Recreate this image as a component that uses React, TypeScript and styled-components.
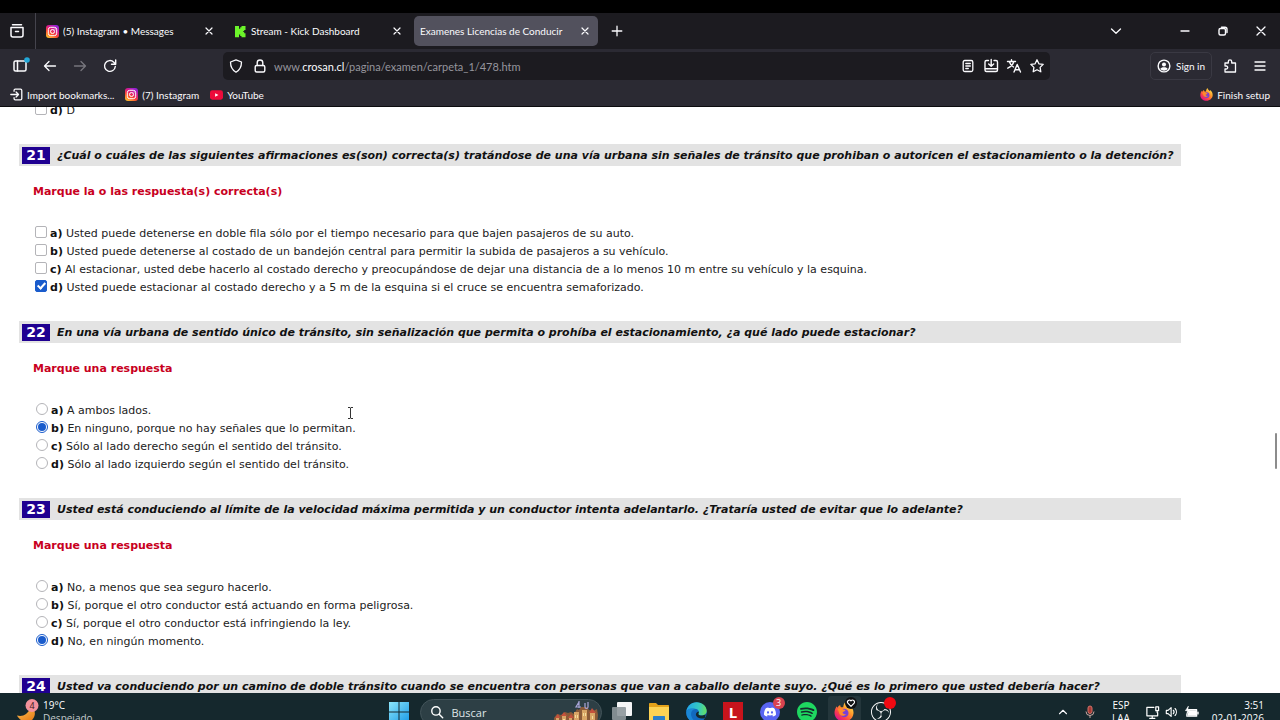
import React from 'react';
import styled, { createGlobalStyle } from 'styled-components';
import { SiDiscord, SiSpotify, SiObsstudio } from 'react-icons/si';

const UI_FONT = '"Open Sans", "Noto Sans", sans-serif';
const CHROME_FONT = 'Lato, "Open Sans", sans-serif';
const PAGE_FONT = '"DejaVu Sans", Verdana, sans-serif';

const GlobalStyle = createGlobalStyle`
  * { box-sizing: border-box; }
  body { margin: 0; background: #fff; font-family: ${UI_FONT}; }
  button { font: inherit; color: inherit; background: none; border: 0; padding: 0; }
  svg { display: block; flex: none; overflow: visible; }
`;

const Screen = styled.div`
  display: flex;
  flex-direction: column;
  height: 100vh;
  overflow: hidden;
  border-top: 13px solid #000;
`;

/* ---------- browser chrome ---------- */

const TabStrip = styled.div`
  display: flex;
  align-items: center;
  flex: none;
  height: 36px;
  background: #1c1b20;
  color: #fbfbfe;
  font-family: ${CHROME_FONT};
  font-size: 10px;
`;

const IconButton = styled.button<{ $width?: number; $dim?: boolean }>`
  display: flex;
  align-items: center;
  justify-content: center;
  flex: none;
  width: ${(p) => p.$width ?? 30}px;
  height: 28px;
  color: ${(p) => (p.$dim ? '#77767e' : '#fbfbfe')};
`;

const RecentBox = styled.div`
  display: flex;
  align-items: center;
  justify-content: center;
  width: 36px;
  height: 100%;
  padding-right: 2px;
  border-right: 1px solid #45444d;
`;

const Tabs = styled.div`
  display: flex;
  gap: 4px;
  padding-left: 2px;
`;

const Tab = styled.div<{ $active?: boolean }>`
  display: flex;
  align-items: center;
  gap: 4px;
  width: 184px;
  height: 30px;
  padding: 0 5px 0 ${(p) => (p.$active ? 6 : 8)}px;
  border-radius: 5px;
  background: ${(p) => (p.$active ? '#52515d' : 'transparent')};
`;

const TabTitle = styled.span`
  flex: 1;
  white-space: nowrap;
  overflow: hidden;
`;

const Spacer = styled.div`
  flex: 1;
`;

const WindowButtons = styled.div`
  display: flex;
  margin-left: 31px;
`;

const Toolbar = styled.div`
  display: flex;
  align-items: center;
  flex: none;
  height: 34px;
  padding: 0 5px;
  background: #2b2a33;
  color: #fbfbfe;
  font-family: ${CHROME_FONT};
  font-size: 10px;
`;

const AddressBar = styled.div`
  display: flex;
  align-items: center;
  flex: 1;
  height: 28px;
  margin: 0 100px 0 98px;
  padding: 0 1px;
  border-radius: 5px;
  background: #1c1b20;
`;

const AddressText = styled.div`
  flex: 1;
  padding-left: 3px;
  color: #96959d;
  font-size: 11px;

  b { color: #fbfbfe; font-weight: 400; }
`;

const SignIn = styled.button`
  display: flex;
  align-items: center;
  gap: 5px;
  width: 62px;
  height: 28px;
  margin-right: 3px;
  padding-left: 6px;
  border: 1px solid #3a3943;
  border-radius: 5px;
  white-space: nowrap;
`;

const Bookmarks = styled.div`
  display: flex;
  align-items: center;
  flex: none;
  gap: 11px;
  height: 24px;
  padding: 0 10px;
  border-bottom: 1px solid #0c0c0f;
  background: #2b2a33;
  color: #fbfbfe;
  font-family: ${CHROME_FONT};
  font-size: 10px;
`;

const Bookmark = styled.a`
  display: flex;
  align-items: center;
  gap: 4px;
  color: inherit;
  text-decoration: none;
  white-space: nowrap;
`;

/* ---------- exam page ---------- */

const Viewport = styled.main`
  position: relative;
  flex: 1;
  min-height: 0;
  overflow: hidden;
  background: #fff;
  color: #222;
  font-family: ${PAGE_FONT};
  font-size: 11px;
`;

const Exam = styled.div`
  margin: -6px 99px 0 19px;
`;

const Question = styled.section`
  padding-bottom: 25px;
`;

const QuestionBar = styled.h2`
  display: flex;
  align-items: center;
  gap: 7px;
  height: 22px;
  margin: 0;
  padding-left: 3px;
  background: #e3e3e3;
  color: #111;
  font-size: 11px;
  font-style: italic;
  font-weight: 700;
  white-space: nowrap;
`;

const QuestionNumber = styled.span`
  width: 28px;
  height: 17px;
  background: #1f0091;
  color: #fff;
  font-size: 14px;
  font-style: normal;
  line-height: 17px;
  text-align: center;
`;

const Prompt = styled.p`
  margin: 18px 0 24px 14px;
  color: #c8001e;
  font-weight: 700;
  line-height: 16px;
`;

const Options = styled.div`
  margin-left: 16px;
`;

const Option = styled.label`
  display: flex;
  align-items: center;
  gap: 3px;
  height: 18px;
  white-space: pre;

  b { color: #111; }
`;

const Choice = styled.input`
  appearance: none;
  position: relative;
  width: 12px;
  height: 12px;
  margin: 0 0 2px ${(p) => (p.type === 'radio' ? 1 : 0)}px;
  border: 1px solid #b4b4b8;
  border-radius: ${(p) => (p.type === 'radio' ? '50%' : '2px')};
  background: #fff;

  &:checked {
    border-color: #1a5ccc;
    background: ${(p) => (p.type === 'radio' ? '#fff' : '#1a5ccc')};
  }

  &[type='radio']:checked::after {
    content: '';
    position: absolute;
    inset: 1px;
    border-radius: 50%;
    background: #1a5ccc;
  }

  &[type='checkbox']:checked::after {
    content: '';
    position: absolute;
    box-sizing: border-box;
    left: 3px;
    top: 0;
    width: 5px;
    height: 8px;
    border: solid #fff;
    border-width: 0 2px 2px 0;
    transform: rotate(42deg);
  }
`;

const ScrollThumb = styled.div`
  position: absolute;
  right: 3px;
  top: 326px;
  width: 2px;
  height: 36px;
  border-radius: 1px;
  background: #8c8c8c;
`;

const Pointer = styled.svg`
  position: absolute;
  left: 347px;
  top: 300px;
`;

/* ---------- taskbar ---------- */

const TaskbarClip = styled.footer`
  flex: none;
  height: 27px;
  overflow: hidden;
  background: #15282d;
  color: #fff;
`;

const Taskbar = styled.div`
  display: grid;
  grid-template-columns: 1fr auto 1fr;
  align-items: center;
  height: 38px;
  font-size: 10px;
  line-height: 13px;
`;

const Weather = styled.div`
  display: flex;
  align-items: center;
  gap: 3px;
  padding-left: 16px;

  small { display: block; font-size: 10px; color: #c3cacc; }
`;

const Apps = styled.div`
  display: flex;
  align-items: center;
`;

const AppButton = styled.button<{ $active?: boolean }>`
  display: flex;
  align-items: center;
  justify-content: center;
  position: relative;
  width: ${(p) => (p.$active ? 33 : 37)}px;
  height: 32px;
  margin: 0 ${(p) => (p.$active ? 2 : 0)}px;
  border-radius: 3px;
  background: ${(p) => (p.$active ? '#24363b' : 'transparent')};
`;

const AppBadge = styled.span<{ $color: string }>`
  position: absolute;
  right: 4px;
  top: 1px;
  width: 12px;
  height: 12px;
  border-radius: 50%;
  background: ${(p) => p.$color};
  color: #fff;
  font-size: 9px;
  line-height: 12px;
  text-align: center;
`;

const SearchBox = styled.label`
  display: flex;
  align-items: center;
  gap: 8px;
  width: 182px;
  height: 27px;
  margin: 0 2px;
  padding: 0 2px 0 9px;
  border: 1px solid #43545a;
  border-radius: 14px;
  background: #2d3f45;
`;

const SearchInput = styled.input`
  flex: 1;
  min-width: 0;
  padding: 0;
  border: 0;
  outline: 0;
  background: none;
  color: #fff;
  font: 11px ${UI_FONT};

  &::placeholder { color: #dfe5e7; opacity: 1; }
`;

const Tray = styled.div`
  display: flex;
  align-items: center;
  justify-content: flex-end;
  padding-right: 16px;
`;

const TrayText = styled.div<{ $align: string; $width: number }>`
  width: ${(p) => p.$width}px;
  text-align: ${(p) => p.$align};
`;

const TrayIcons = styled.div`
  display: flex;
  align-items: center;
  gap: 5px;
  padding: 0 6px 0 7px;
`;

/* ---------- drawings ---------- */

type GlyphProps = { size?: number; width?: number; children: React.ReactNode };

const Glyph = ({ size = 16, width = 1.3, children }: GlyphProps) => (
  <svg width={size} height={size} viewBox="0 0 16 16" fill="none" stroke="currentColor"
    strokeWidth={width} strokeLinecap="round" strokeLinejoin="round" aria-hidden="true">
    {children}
  </svg>
);

const CloseGlyph = ({ size = 16 }: { size?: number }) => (
  <Glyph size={size} width={1.2}><path d="M5 5l6 6M11 5l-6 6" /></Glyph>
);

const InstagramLogo = ({ id }: { id: string }) => (
  <svg width="13" height="13" viewBox="0 0 13 13" aria-hidden="true">
    <defs>
      <linearGradient id={id} x1="0.2" y1="1" x2="0.8" y2="0">
        <stop offset="0" stopColor="#ffc02e" />
        <stop offset="0.35" stopColor="#fb4a32" />
        <stop offset="0.65" stopColor="#d61a8d" />
        <stop offset="1" stopColor="#8a22e0" />
      </linearGradient>
    </defs>
    <rect width="13" height="13" rx="3" fill={`url(#${id})`} />
    <rect x="2.3" y="2.3" width="8.4" height="8.4" rx="2.4" fill="none" stroke="#fff" />
    <circle cx="6.5" cy="6.5" r="2" fill="none" stroke="#fff" />
    <circle cx="9" cy="4" r="0.6" fill="#fff" />
  </svg>
);

const KickLogo = () => (
  <svg width="13" height="13" viewBox="0 0 13 13" aria-hidden="true">
    <path fill="#6cf52a" d="M1 1h4v2.700h1.200V2.300H7.500V1H11.500v4H10.200v1.300H9v.6h1.200v1.300H11.500v4h-4v-1.300H6.200V9.400H5v2.800H1z" />
  </svg>
);

const YouTubeLogo = () => (
  <svg width="13" height="10" viewBox="0 0 14 10" aria-hidden="true">
    <rect width="14" height="10" rx="2.500" fill="#ed0b3b" />
    <path d="M5.500 3v4l3.600-2z" fill="#fff" />
  </svg>
);

const FirefoxLogo = ({ size, id }: { size: number; id: string }) => (
  <svg width={size} height={size} viewBox="0 0 20 20" aria-hidden="true">
    <defs>
      <linearGradient id={id} x1="0.85" y1="0.1" x2="0.2" y2="0.9">
        <stop offset="0" stopColor="#ffe14a" />
        <stop offset="0.4" stopColor="#ff9129" />
        <stop offset="0.75" stopColor="#fa3e4c" />
        <stop offset="1" stopColor="#e01587" />
      </linearGradient>
    </defs>
    <path fill={`url(#${id})`} d="M11.500 0c.4 2.200 2.200 3.200 3.600 4.800.4-.5.5-1 .3-1.600 2.800 2 4.300 4.700 4.100 8C19.200 16 15 19.700 10 19.700S.6 15.800.5 11c0-2.600.8-4.900 2.300-6.800 0 .6.200 1.100.6 1.500C4.100 4.500 5 3.600 6.200 3c-.1.900.2 1.700.8 2.300h2.200c.2-2.100.9-4 2.300-5.300z" />
    <circle cx="10.200" cy="11" r="4.300" fill="#7a3fd6" />
    <path fill="#ff8a2a" d="M3.500 7.200c2-1.400 4.100-1.200 5.700.2l2.300.6c-.4 1.300-1.700 1.700-2.800 2-.2 1.700 1.400 2.700 3.300 2-1 2.500-5.600 2.600-6.800-.8-.5-1.700-.9-2.900-1.700-4z" />
  </svg>
);

const MoonIcon = () => (
  <svg width="24" height="24" viewBox="0 0 24 24" aria-hidden="true">
    <defs>
      <linearGradient id="moon" x1="0" y1="0" x2="0.6" y2="1">
        <stop offset="0" stopColor="#ffc95a" />
        <stop offset="1" stopColor="#e8811c" />
      </linearGradient>
    </defs>
    <path fill="url(#moon)" d="M15 6c4.500 3.500 5.200 9.500 1.500 13.500C12.500 23.500 5 22.500 1 15.500c3 .8 6.600.5 9-1.500 2.500-2 4.600-4.700 5-8z" />
    <circle cx="16" cy="5.500" r="6.500" fill="#f2919b" />
    <text x="16" y="9" fontSize="9" textAnchor="middle" fill="#3a1a1e" fontFamily="Open Sans">4</text>
  </svg>
);

const StartIcon = () => (
  <svg width="20" height="20" viewBox="0 0 20 20" aria-hidden="true">
    <defs>
      <linearGradient id="win" x1="0" y1="0" x2="1" y2="1">
        <stop offset="0" stopColor="#8ce6fb" />
        <stop offset="1" stopColor="#1b9be6" />
      </linearGradient>
    </defs>
    <path fill="url(#win)" d="M0 0h9.500v9.500H0zM10.500 0H20v9.500h-9.500zM0 10.500h9.500V20H0zM10.500 10.500H20V20h-9.500z" />
  </svg>
);

const CastleArt = () => (
  <svg width="46" height="25" viewBox="0 0 46 25" aria-hidden="true">
    <path fill="#8a5a38" d="M1 18l3-4 4 1 4-3 3 1 3-1 3 2 3-5 2 1 2-3h6l2 3 4 1 4-2 1 6-1 10H1z" />
    <path fill="#d9a566" d="M3 25v-7h3v7zM9 25v-9h4v9zM16 25v-7h3v7zM21 25V12h5v13zM29 25V10h5v15zM37 25V13h5v12z" />
    <path fill="#c4513c" d="M2 18l3-4 2 4zM8 16l3-4 3 4zM15 18l3-4 3 4zM36 13l3-5 4 5z" />
    <path fill="#f4dc9c" d="M10 19h2v2h-2zM22 15h1v3h-1zM24 15h1v3h-1zM30 13h1v3h-1zM32 13h1v3h-1zM39 16h1v3h-1zM22 21h3v4h-3zM31 20h2v5h-2z" />
    <path fill="none" stroke="#a9a5d8" strokeWidth="1.200" d="M26 2l-3 5h5M26 1v7M32 3v4c0 2 3 2 3 0V2" />
  </svg>
);

const TaskViewIcon = () => (
  <svg width="20" height="20" viewBox="0 0 20 20" aria-hidden="true">
    <rect x="5" y="0" width="15" height="14" rx="1" fill="#f4f5f6" />
    <rect x="0" y="5" width="14" height="13" rx="1" fill="#8d979b" fillOpacity="0.9" />
  </svg>
);

const FolderIcon = () => (
  <svg width="22" height="20" viewBox="0 0 22 20" aria-hidden="true">
    <path fill="#e3a21a" d="M1 2c0-.6.400-1 1-1h6l2 2h10c.6 0 1 .4 1 1v4H1z" />
    <path fill="#fcd354" d="M1 5h20v14H1z" />
    <path fill="#2a7fc9" d="M5 19v-4c0-.6.400-1 1-1h10c.6 0 1 .4 1 1v4z" />
  </svg>
);

const EdgeIcon = () => (
  <svg width="21" height="21" viewBox="0 0 21 21" aria-hidden="true">
    <defs>
      <linearGradient id="edge-top" x1="0" y1="0.4" x2="1" y2="0.5">
        <stop offset="0" stopColor="#22a6e8" />
        <stop offset="0.6" stopColor="#35c9c2" />
        <stop offset="1" stopColor="#65de62" />
      </linearGradient>
    </defs>
    <circle cx="10.500" cy="10.500" r="10.300" fill="#1269bf" />
    <path fill="url(#edge-top)" d="M.3 10C.8 4.300 5.200.2 10.600.2c5.600 0 10.100 4 10.100 8.600 0 3-2.300 4.800-5 4.800-2.300 0-3.700-1-3.200-2 .9-1.200.3-4.800-3.600-4.800C4.500 6.800.8 7.600.3 10z" />
    <path fill="#15282d" d="M12.700 9.500c.4 1-.1 1.800-.4 2.200-.3.800 1.200 2 4 1.900l3.500-1-1 3.400c-3 1.200-7.300.6-8.600-2.200-.9-2 .6-4 2.500-4.300z" />
    <path fill="#1b87d6" d="M.4 9.500C1.500 6.500 6 5.600 9 7c-3 .6-4.600 3.500-3.700 6.900.7 2.800 3 5.200 5.700 6.700C5 21-.6 16 .4 9.500z" />
  </svg>
);

const LTile = styled.span`
  width: 20px;
  height: 20px;
  background: #c8141c;
  font-size: 15px;
  font-weight: 700;
  line-height: 20px;
  text-align: center;
`;

const DiscordDisc = styled.span`
  display: flex;
  align-items: center;
  justify-content: center;
  width: 20px;
  height: 20px;
  border-radius: 50%;
  background: #5865f2;
`;

/* ---------- content ---------- */

type QuestionData = {
  number: number;
  title: string;
  prompt: string;
  type: 'checkbox' | 'radio';
  options: string[];
  selected: number;
};

const QUESTIONS: QuestionData[] = [
  {
    number: 21,
    title: '¿Cuál o cuáles de las siguientes afirmaciones es(son) correcta(s) tratándose de una vía urbana sin señales de tránsito que prohiban o autoricen el estacionamiento o la detención?',
    prompt: 'Marque la o las respuesta(s) correcta(s)',
    type: 'checkbox',
    options: [
      'Usted puede detenerse en doble fila sólo por el tiempo necesario para que bajen pasajeros de su auto.',
      'Usted puede detenerse al costado de un bandejón central para permitir la subida de pasajeros a su vehículo.',
      'Al estacionar, usted debe hacerlo al costado derecho y preocupándose de dejar una distancia de a lo menos 10 m entre su vehículo y la esquina.',
      'Usted puede estacionar al costado derecho y a 5 m de la esquina si el cruce se encuentra semaforizado.',
    ],
    selected: 3,
  },
  {
    number: 22,
    title: 'En una vía urbana de sentido único de tránsito, sin señalización que permita o prohíba el estacionamiento, ¿a qué lado puede estacionar?',
    prompt: 'Marque una respuesta',
    type: 'radio',
    options: [
      'A ambos lados.',
      'En ninguno, porque no hay señales que lo permitan.',
      'Sólo al lado derecho según el sentido del tránsito.',
      'Sólo al lado izquierdo según el sentido del tránsito.',
    ],
    selected: 1,
  },
  {
    number: 23,
    title: 'Usted está conduciendo al límite de la velocidad máxima permitida y un conductor intenta adelantarlo. ¿Trataría usted de evitar que lo adelante?',
    prompt: 'Marque una respuesta',
    type: 'radio',
    options: [
      'No, a menos que sea seguro hacerlo.',
      'Sí, porque el otro conductor está actuando en forma peligrosa.',
      'Sí, porque el otro conductor está infringiendo la ley.',
      'No, en ningún momento.',
    ],
    selected: 3,
  },
  {
    number: 24,
    title: 'Usted va conduciendo por un camino de doble tránsito cuando se encuentra con personas que van a caballo delante suyo. ¿Qué es lo primero que usted debería hacer?',
    prompt: '',
    type: 'radio',
    options: [],
    selected: -1,
  },
];

const LETTERS = ['a', 'b', 'c', 'd'];

const QuestionBlock = ({ data }: { data: QuestionData }) => (
  <Question>
    <QuestionBar>
      <QuestionNumber>{data.number}</QuestionNumber>
      {data.title}
    </QuestionBar>
    {data.prompt && <Prompt>{data.prompt}</Prompt>}
    <Options>
      {data.options.map((text, i) => (
        <Option key={text}>
          <Choice type={data.type} name={`q${data.number}`} defaultChecked={i === data.selected} />
          <span><b>{LETTERS[i]})</b> {text}</span>
        </Option>
      ))}
    </Options>
  </Question>
);

export default function App() {
  return (
    <Screen>
      <GlobalStyle />
      <TabStrip>
        <RecentBox>
          <IconButton $width={28} aria-label="Recent browsing">
            <Glyph width={1.5}><path d="M3.500 1.800h9M2 4.600h12v7.400a2 2 0 0 1-2 2h-8a2 2 0 0 1-2-2zM6.500 8.500h3" /></Glyph>
          </IconButton>
        </RecentBox>
        <Tabs>
          <Tab>
            <InstagramLogo id="ig-tab" />
            <TabTitle>(5) Instagram • Messages</TabTitle>
            <IconButton $width={16} aria-label="Close tab"><CloseGlyph /></IconButton>
          </Tab>
          <Tab>
            <KickLogo />
            <TabTitle>Stream - Kick Dashboard</TabTitle>
            <IconButton $width={16} aria-label="Close tab"><CloseGlyph /></IconButton>
          </Tab>
          <Tab $active>
            <TabTitle>Examenes Licencias de Conducir</TabTitle>
            <IconButton $width={16} aria-label="Close tab"><CloseGlyph /></IconButton>
          </Tab>
        </Tabs>
        <IconButton $width={37} aria-label="New tab">
          <Glyph width={1.3}><path d="M8 3.200v9.600M3.200 8h9.600" /></Glyph>
        </IconButton>
        <Spacer />
        <IconButton $width={38} aria-label="List all tabs">
          <Glyph><path d="M3.500 6L8 10.300 12.500 6" /></Glyph>
        </IconButton>
        <WindowButtons>
          <IconButton $width={38} aria-label="Minimize">
            <Glyph><path d="M4 8h8" /></Glyph>
          </IconButton>
          <IconButton $width={38} aria-label="Restore">
            <Glyph width={1.4}><rect x="4" y="5.500" width="6.500" height="6.500" rx="1.500" /><path d="M6.500 4.200H10a2 2 0 0 1 2 2v3.300" /></Glyph>
          </IconButton>
          <IconButton $width={38} aria-label="Close window">
            <Glyph width={1.3}><path d="M4 4l8 8M12 4l-8 8" /></Glyph>
          </IconButton>
        </WindowButtons>
      </TabStrip>

      <Toolbar>
        <IconButton aria-label="Sidebar">
          <Glyph width={1.5}>
            <rect x="2" y="3" width="12" height="10" rx="1.500" />
            <path d="M5.500 3v10" />
            <circle cx="15" cy="2" r="2.800" fill="#22a7d8" stroke="none" />
          </Glyph>
        </IconButton>
        <IconButton aria-label="Back"><Glyph><path d="M13.500 8h-11M7 3.500L2.500 8 7 12.500" /></Glyph></IconButton>
        <IconButton $dim aria-label="Forward"><Glyph><path d="M2.500 8h11M9 3.500L13.500 8 9 12.500" /></Glyph></IconButton>
        <IconButton aria-label="Reload">
          <Glyph width={1.4}><path d="M13.300 8.500A5.400 5.400 0 1 1 11.800 4.200L13.500 6M13.700 2v4.200H9.500" /></Glyph>
        </IconButton>
        <AddressBar>
          <IconButton $width={24} aria-label="Tracking protection">
            <Glyph><path d="M8 1.800L13.500 4c0 4.500-1.500 8-5.500 10.200C4 12 2.500 8.500 2.500 4z" /></Glyph>
          </IconButton>
          <IconButton $width={23} aria-label="Site information">
            <Glyph width={1.4}><rect x="3.200" y="7.500" width="9.600" height="6.500" rx="1.500" /><path d="M5.200 7.500V4.800a2.800 2.800 0 0 1 5.600 0v2.700" /></Glyph>
          </IconButton>
          <AddressText>www.<b>crosan.cl</b>/pagina/examen/carpeta_1/478.htm</AddressText>
          <IconButton $width={23} aria-label="Reader view">
            <Glyph><rect x="3.200" y="2.500" width="9.600" height="11" rx="1.500" /><path d="M5.800 5.500h4.500M5.800 8h4.500M5.800 10.500h2.500" /></Glyph>
          </IconButton>
          <IconButton $width={23} aria-label="Install page">
            <Glyph width={1.4}><path d="M5.500 2.500h-2A1.500 1.500 0 0 0 2 4v8a1.500 1.500 0 0 0 1.500 1.500h9.500a1.500 1.500 0 0 0 1.500-1.500V4a1.500 1.500 0 0 0-1.500-1.500h-2M2 10.800h12.500M8.200 1.500v6.500M5.700 6l2.500 2.300L10.700 6" /></Glyph>
          </IconButton>
          <IconButton $width={23} aria-label="Translate">
            <Glyph width={1.4}><path d="M1.500 3.500h8M5.500 1.800v1.700M7.800 3.500C7 6.500 4.500 9 1.800 10.200M3.300 3.500C4 6 5.500 7.800 7.500 9M8 14l3.200-7.500L14.500 14M9 11.800h4.500" /></Glyph>
          </IconButton>
          <IconButton $width={24} aria-label="Bookmark this page">
            <Glyph><path d="M8 1.800l1.900 4 4.300.6-3.100 3 .7 4.400L8 11.700l-3.800 2.100.7-4.400-3.100-3 4.300-.6z" /></Glyph>
          </IconButton>
        </AddressBar>
        <SignIn>
          <Glyph size={14} width={1.6}>
            <circle cx="8" cy="8" r="6.700" />
            <circle cx="8" cy="6.300" r="2.300" fill="currentColor" stroke="none" />
            <path d="M3.800 11.500c.5-1.500 2-2 4.200-2s3.700.5 4.200 2C11 12.800 9.500 13.300 8 13.300s-3-.5-4.200-1.800z" fill="currentColor" stroke="none" />
          </Glyph>
          Sign in
        </SignIn>
        <IconButton aria-label="Extensions">
          <Glyph><path d="M3 5h3.300V3.500a1.700 1.700 0 0 1 3.400 0V5H13.500V14H3v-3h1.200a1.500 1.500 0 0 0 0-3H3z" /></Glyph>
        </IconButton>
        <IconButton aria-label="Menu"><Glyph><path d="M3 4h10M3 8h10M3 12h10" /></Glyph></IconButton>
      </Toolbar>

      <Bookmarks>
        <Bookmark href="#import">
          <Glyph size={13} width={1.6}><path d="M5 4V3a1.500 1.500 0 0 1 1.500-1.500H13A1.500 1.500 0 0 1 14.500 3v10a1.500 1.500 0 0 1-1.500 1.500H6.500A1.500 1.500 0 0 1 5 13v-1M1 8h9.500M7.500 5l3 3-3 3" /></Glyph>
          Import bookmarks...
        </Bookmark>
        <Bookmark href="#instagram"><InstagramLogo id="ig-bm" />(7) Instagram</Bookmark>
        <Bookmark href="#youtube"><YouTubeLogo />YouTube</Bookmark>
        <Spacer />
        <Bookmark href="#setup"><FirefoxLogo size={13} id="fx-bm" />Finish setup</Bookmark>
      </Bookmarks>

      <Viewport>
        <Exam>
          <Question>
            <Options>
              <Option>
                <Choice type="checkbox" name="q20" />
                <span><b>d)</b> D</span>
              </Option>
            </Options>
          </Question>
          {QUESTIONS.map((q) => <QuestionBlock key={q.number} data={q} />)}
        </Exam>
        <Pointer width="7" height="12" viewBox="0 0 7 12" fill="none" stroke="#333" aria-hidden="true">
          <path d="M1 .5h2l.5.5.5-.5h2M3.500 1v10M1 11.500h2l.5-.5.5.5h2" />
        </Pointer>
        <ScrollThumb />
      </Viewport>

      <TaskbarClip>
        <Taskbar>
          <Weather>
            <MoonIcon />
            <div>19°C<small>Despejado</small></div>
          </Weather>
          <Apps>
            <AppButton aria-label="Start"><StartIcon /></AppButton>
            <SearchBox>
              <Glyph size={14} width={1.6}><circle cx="6.800" cy="6.800" r="4.800" /><path d="M10.500 10.500l4 4" /></Glyph>
              <SearchInput placeholder="Buscar" aria-label="Buscar" />
              <CastleArt />
            </SearchBox>
            <AppButton aria-label="Task view"><TaskViewIcon /></AppButton>
            <AppButton aria-label="Files"><FolderIcon /></AppButton>
            <AppButton aria-label="Edge"><EdgeIcon /></AppButton>
            <AppButton aria-label="Launcher"><LTile>L</LTile></AppButton>
            <AppButton aria-label="Discord">
              <DiscordDisc><SiDiscord size={12} /></DiscordDisc>
              <AppBadge $color="#d8434f">3</AppBadge>
            </AppButton>
            <AppButton aria-label="Spotify"><SiSpotify size={20} color="#1ed760" /></AppButton>
            <AppButton $active aria-label="Firefox">
              <FirefoxLogo size={20} id="fx-task" />
              <AppBadge $color="#101214">
                <Glyph size={12} width={1.500}><path d="M8 12.500L3.800 8.200a2.500 2.500 0 0 1 4.200-3 2.500 2.500 0 0 1 4.200 3z" /></Glyph>
              </AppBadge>
            </AppButton>
            <AppButton aria-label="OBS">
              <SiObsstudio size={20} />
              <AppBadge $color="#f00a12" />
            </AppButton>
          </Apps>
          <Tray>
            <IconButton $width={26} aria-label="Hidden icons"><Glyph size={14}><path d="M4 10l4-4 4 4" /></Glyph></IconButton>
            <IconButton $width={28} aria-label="Microphone">
              <svg width="12" height="14" viewBox="0 0 12 14" fill="none" stroke="#c9a9a4" aria-hidden="true">
                <rect x="4" y="1" width="4" height="7.500" rx="2" fill="#a63a34" stroke="#d2736a" />
                <path d="M2 6.500a4 4 0 0 0 8 0M6 10.500V13" />
              </svg>
            </IconButton>
            <TrayText $align="center" $width={34}>ESP<br />LAA</TrayText>
            <TrayIcons>
              <Glyph size={15}><path d="M9.500 2.500H2v9h11.500V8M5 14.200h5.500M7.700 11.500v2.700M11.500 2h3v4h-3zM13 6v2" /></Glyph>
              <Glyph size={14}><path d="M1.500 6.200h2L7 3v10L3.500 9.800h-2zM9.500 6a3 3 0 0 1 0 4M11.500 4a6 6 0 0 1 0 8" /></Glyph>
              <Glyph size={15}><path d="M5 5h8.500v7H3V10M15 7.500v2" /><path d="M5.500 5.500h7.500v6H4V9.500zM4.500 1.500L1.500 6h2.200L3 9.500 6.500 5H4.200z" fill="currentColor" strokeWidth="0.6" /></Glyph>
            </TrayIcons>
            <TrayText $align="right" $width={59}>3:51<br />02-01-2026</TrayText>
          </Tray>
        </Taskbar>
      </TaskbarClip>
    </Screen>
  );
}
